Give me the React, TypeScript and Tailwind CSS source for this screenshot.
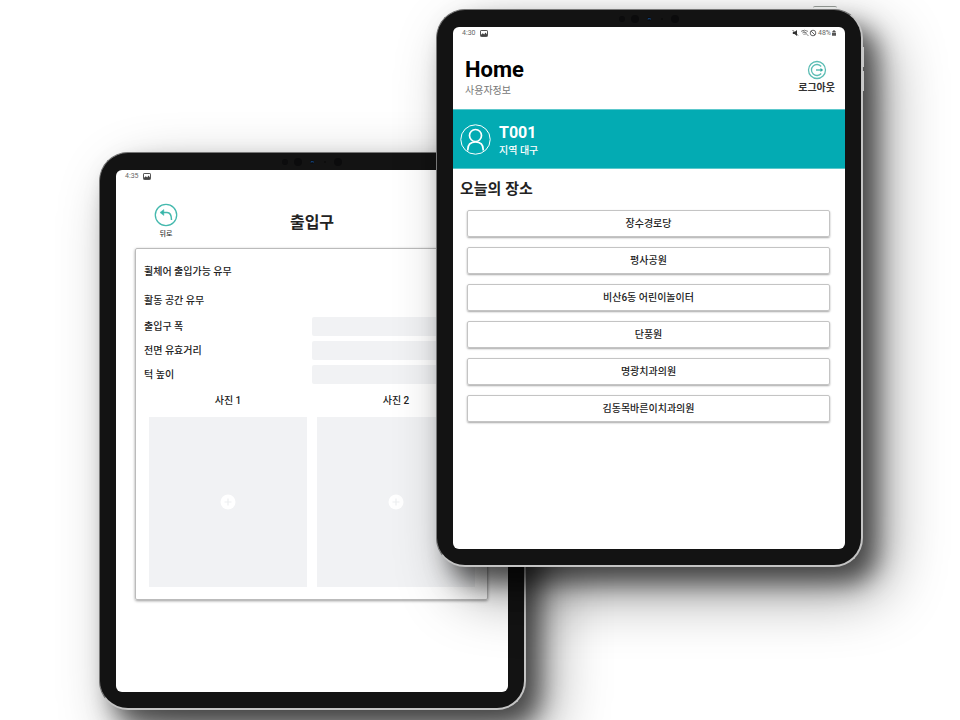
import type { ReactNode } from "react";

const PLACES = [
  "장수경로당",
  "평사공원",
  "비산6동 어린이놀이터",
  "단풍원",
  "명광치과의원",
  "김동목바른이치과의원",
];

const MEASURES = [
  { id: "door-width", label: "출입구 폭" },
  { id: "front-distance", label: "전면 유효거리" },
  { id: "sill-height", label: "턱 높이" },
];

function Cameras() {
  return (
    <svg aria-hidden="true" width="66" height="10" viewBox="0 0 66 10">
      <circle cx="6" cy="5" r="3" fill="#0c0c0d" />
      <circle cx="19" cy="5" r="4" fill="#0b0b0c" />
      <circle cx="33" cy="5" r="2" fill="#0d0d0f" />
      <path d="M32 5.500v-.8h2.400v.8" fill="none" stroke="#1455a0" strokeWidth="0.800" />
      <circle cx="46" cy="5" r="1" fill="#0c0c0d" />
      <circle cx="59" cy="5" r="4" fill="#0b0b0c" />
    </svg>
  );
}

function PictureIcon() {
  return (
    <svg aria-hidden="true" width="8" height="7" viewBox="0 0 8 7">
      <rect x="0.5" y="0.5" width="7" height="6" rx="0.6" fill="#fff" stroke="#555" />
      <path d="M1 6V4.800L2.800 3.200 4.200 4.400 5.500 2.400 7 4.400V6Z" fill="#444" />
    </svg>
  );
}

function StatusIcons() {
  return (
    <svg aria-hidden="true" width="25" height="8" viewBox="0 0 25 8" fill="none" stroke="#666">
      <path d="M.8 3h1.700L5 1v6L2.500 5H.8Z" fill="#333" stroke="none" />
      <path d="M.5 1l5.500 5.500" stroke="#333" strokeWidth="0.800" />
      <path d="M9 2.400q3.500-2.400 7 0M10.300 4q2.200-1.500 4.400 0M11.500 5.500q1-.6 2 0M10.500 1l6 6" strokeWidth="0.800" />
      <circle cx="21" cy="4" r="2.800" />
      <path d="M19 2l4 4" />
    </svg>
  );
}

function BatteryIcon() {
  return (
    <svg aria-hidden="true" width="4" height="6" viewBox="0 0 5 7" fill="#555">
      <path d="M1.500 0h2v1h1v1.500h-4V1h1ZM0 3.200h5V7H0Z" />
    </svg>
  );
}

function StatusBar({ time, full = false }: { time: string; full?: boolean }) {
  return (
    <div className="flex h-3 items-center justify-between px-[9px] text-[7px] leading-3 text-[#666]">
      <div className="flex items-center gap-1">
        <span>{time}</span>
        <PictureIcon />
      </div>
      {full && (
        <div className="flex items-center gap-px">
          <StatusIcons />
          <span>48%</span>
          <BatteryIcon />
        </div>
      )}
    </div>
  );
}

function Tablet({ place, children }: { place: string; children: ReactNode }) {
  return (
    <div className={`absolute ${place}`}>
      <div className="relative flex h-[558px] w-[427px] flex-col rounded-[29px] border border-r-2 border-b-2 border-[#777] border-r-[#c4c4c4] border-b-[#c4c4c4] bg-[#131313] px-4 pb-4 shadow-[14px_16px_24px_rgba(0,0,0,0.58),22px_26px_60px_rgba(0,0,0,0.42)]">
        <div className="flex h-[17px] shrink-0 items-center justify-center">
          <Cameras />
        </div>
        <div className="flex min-h-0 flex-1 flex-col overflow-hidden rounded-md bg-white">{children}</div>
      </div>
      <div className="absolute -top-[3px] right-[26px] h-[2px] w-6 rounded-t-sm border-t border-[#8d928e] bg-[#e4e6e4]" />
      <div className="absolute top-[38px] -right-px h-5 w-[2px] bg-[#c9c9c9]" />
      <div className="absolute top-[62px] -right-px h-5 w-[2px] bg-[#c9c9c9]" />
    </div>
  );
}

function PhotoSlot({ title }: { title: string }) {
  return (
    <div className="flex flex-1 flex-col text-center">
      <h2 className="text-[10px] leading-4 font-medium">{title}</h2>
      <button
        type="button"
        aria-label={title}
        className="mt-2 flex h-[170px] items-center justify-center bg-[#f1f2f4]"
      >
        <svg aria-hidden="true" width="16" height="16" viewBox="0 0 16 16">
          <circle cx="8" cy="8" r="7.500" fill="#fff" />
          <path d="M8 4.500v7M4.500 8h7" stroke="#edeff1" strokeWidth="1.200" />
        </svg>
      </button>
    </div>
  );
}

function EntranceScreen() {
  return (
    <>
      <StatusBar time="4:35" />
      <header className="grid h-[66px] shrink-0 grid-cols-3 pt-[21px]">
        <button type="button" className="ml-[38px] flex w-6 flex-col items-center self-start">
          <svg aria-hidden="true" width="24" height="24" viewBox="0 0 24 24" fill="none" stroke="#45b9ae">
            <circle cx="12" cy="12" r="10.700" strokeWidth="1.300" />
            <path d="M8 9.500h5q4.500 0 4.500 7.500" strokeWidth="1.500" />
            <path d="M9.800 6.500v6L6 9.500Z" fill="#35b5a8" strokeWidth="0.500" />
          </svg>
          <span className="pt-px text-[7px] leading-3 font-medium text-[#333]">뒤로</span>
        </button>
        <h1 className="pt-2 text-center text-base leading-6 font-bold">출입구</h1>
      </header>
      <section className="mr-5 ml-[19px] rounded-[2px] border border-[#bbb] pt-[15px] pr-3 pb-3 pl-2 text-[10px] font-medium shadow-[0_1px_3px_rgba(0,0,0,0.4)]">
        <p className="leading-4">휠체어 출입가능 유무</p>
        <p className="mt-[13px] leading-4">활동 공간 유무</p>
        <div className="mt-2 flex flex-col gap-[5px]">
          {MEASURES.map((m) => (
            <div key={m.id} className="grid grid-cols-2 items-center gap-x-1">
              <label htmlFor={m.id}>{m.label}</label>
              <input id={m.id} type="text" className="h-[19px] w-full rounded-[2px] bg-[#f1f2f4] px-2" />
            </div>
          ))}
        </div>
        <div className="mt-[9px] ml-[5px] flex gap-[10px]">
          <PhotoSlot title="사진 1" />
          <PhotoSlot title="사진 2" />
        </div>
      </section>
    </>
  );
}

function HomeScreen() {
  return (
    <>
      <StatusBar time="4:30" full />
      <header className="flex h-[70px] shrink-0 justify-between pt-[18px] pr-[10px] pl-3">
        <div>
          <h1 className="text-[22px] leading-[26px] font-bold text-black">Home</h1>
          <p className="text-[10px] leading-4 text-[#777]">사용자정보</p>
        </div>
        <button type="button" className="flex flex-col items-center self-start pt-[3px]">
          <svg aria-hidden="true" width="20" height="20" viewBox="0 0 20 20" fill="none" stroke="#5bbdb4">
            <circle cx="10" cy="10" r="8.500" strokeWidth="1.300" />
            <path d="M14.200 6.500A5.500 5.500 0 1 0 14.200 13.500M9 10h5" strokeWidth="1.300" />
            <path d="M13.500 8l2.700 2-2.700 2Z" fill="#2fa89d" stroke="none" />
          </svg>
          <span className="text-[10px] leading-4 font-bold text-[#333]">로그아웃</span>
        </button>
      </header>
      <section className="flex h-[60px] shrink-0 items-center gap-2 border-y border-[#5cc8cc] bg-[#03abb3] pl-[7px] text-white">
        <svg aria-hidden="true" width="31" height="31" viewBox="0 0 31 31" fill="none" stroke="#fff">
          <circle cx="15.500" cy="15.500" r="14.700" strokeWidth="1" />
          <circle cx="15.500" cy="11.500" r="6" strokeWidth="1.700" />
          <path d="M7.800 26.500v-1q0-7.500 7.700-7.500t7.700 7.500v1" strokeWidth="1.700" />
        </svg>
        <div className="pt-1">
          <p className="text-base leading-5 font-bold">T001</p>
          <p className="text-[10px] leading-4 font-medium">지역 대구</p>
        </div>
      </section>
      <main className="flex flex-col pt-2">
        <h2 className="pl-[7px] text-[15px] leading-6 font-bold">오늘의 장소</h2>
        <ul className="mt-[9px] mr-[15px] ml-[14px] flex flex-col gap-[10px]">
          {PLACES.map((name) => (
            <li key={name} className="flex">
              <button
                type="button"
                className="h-[27px] flex-1 rounded-[2px] border border-[#c4c4c4] text-[10px] font-medium shadow-[0_1px_2px_rgba(0,0,0,0.35)]"
              >
                {name}
              </button>
            </li>
          ))}
        </ul>
      </main>
    </>
  );
}

export default function App() {
  return (
    <div className="relative h-screen overflow-hidden bg-white font-[Roboto,'Noto_Sans_CJK_KR',sans-serif] text-[#222]">
      <Tablet place="top-[152px] left-[99px]">
        <EntranceScreen />
      </Tablet>
      <Tablet place="top-[9px] left-[436px]">
        <HomeScreen />
      </Tablet>
    </div>
  );
}
